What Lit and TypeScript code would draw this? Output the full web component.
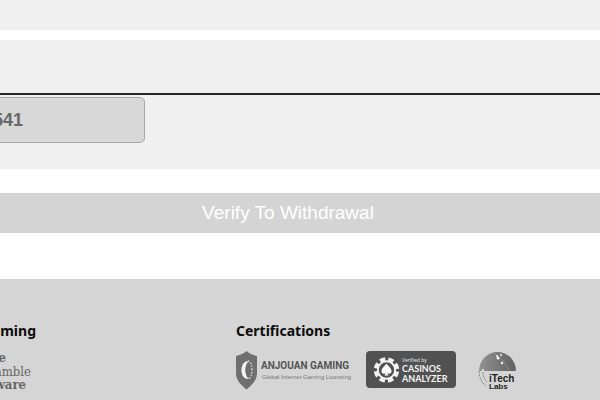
import { LitElement, html, css, svg } from "lit";
import { customElement } from "lit/decorators.js";

const aware = svg`
  <svg width="60" height="40" viewBox="0 0 60 40" role="img" aria-label="be Gamble Aware">
    <text class="aware strong" x="30" y="11">be</text>
    <text class="aware" x="55" y="25">Gamble</text>
    <text class="aware strong" x="50" y="38">Aware</text>
  </svg>`;

const anjouan = svg`
  <svg width="116" height="39" viewBox="0 0 116 39" role="img" aria-label="Anjouan Gaming">
    <path d="M10.500 0C7 3 4 4 0 5V22C0 29 4 33 10.500 38.500C17 33 21 29 21 22V5C17 4 14 3 10.500 0Z" fill="#6f6f6f"/>
    <path d="M13 10C3 9 3 29 13 28C8 25 8 13 13 10Z" fill="#f4f4f4"/>
    <path d="M12 10Q16 11 16 19Q16 27 12 28" fill="none" stroke="#d4d4d4" stroke-width="1.500" stroke-dasharray="1.500 1.500"/>
    <text class="name" x="25" y="18">ANJOUAN GAMING</text>
    <text class="tag" x="26" y="28">Global Internet Gaming Licensing</text>
  </svg>`;

const analyzer = svg`
  <svg width="90" height="38" viewBox="0 0 90 38" role="img" aria-label="Verified by Casinos Analyzer">
    <rect width="90" height="37" rx="4" fill="#515151"/>
    <circle cx="20.500" cy="19" r="10.500" fill="none" stroke="#f2f2f2" stroke-width="4.500" stroke-dasharray="5.250 2.997" transform="rotate(8 20.500 19)"/>
    <circle cx="20.500" cy="19" r="8.700" fill="none" stroke="#f2f2f2" stroke-width="2"/>
    <path d="M20.500 12.500C19 15 15.500 17 15.500 20C15.500 23 18.500 23.500 20 21.500L18.500 24.500H22.500L21 21.500C22.500 23.500 25.500 23 25.500 20C25.500 17 22 15 20.500 12.500Z" fill="#fff"/>
    <text class="by" x="36" y="11">Verified by</text>
    <text class="brand" x="36" y="21">CASINOS</text>
    <text class="brand" x="36" y="31">ANALYZER</text>
  </svg>`;

const itech = svg`
  <svg width="40" height="40" viewBox="0 0 40 40" role="img" aria-label="iTech Labs">
    <defs>
      <linearGradient id="globe" x1="0" y1="0" x2="1" y2="0">
        <stop offset="0" stop-color="#929292"/>
        <stop offset="1" stop-color="#606060"/>
      </linearGradient>
    </defs>
    <path d="M1 20A18.500 19 0 0 1 38 20Z" fill="url(#globe)"/>
    <path d="M15 2Q25 7 31 19" fill="none" stroke="#8c8c8c" stroke-width="1"/>
    <g fill="#f2f2f2"><circle cx="19" cy="5" r="1"/><circle cx="23" cy="4" r="1"/><circle cx="20" cy="7" r="1.500"/><circle cx="24" cy="12" r="1.200"/><circle cx="5" cy="19" r="1"/></g>
    <path d="M1 20C1 27 4 32 8 35M5 21C5 26 7 29 9 31" fill="none" stroke="#858585" stroke-width="1" stroke-dasharray="2 1"/>
    <text class="lab" x="11" y="31">iTech</text>
    <text class="lab small" x="11" y="38">Labs</text>
  </svg>`;

@customElement("app-root")
export class AppRoot extends LitElement {
  static styles = css`
    :host {
      display: block;
      overflow: hidden;
      background: #fff;
      font-family: "Liberation Sans", Arial, sans-serif;
    }
    * { box-sizing: border-box; }
    .page { margin-left: -24px; }
    .strip { height: 30px; background: #f0f0f0; }
    .panel {
      margin-top: 10px;
      padding: 53px 0 26px;
      background: #f0f0f0;
    }
    .rule {
      margin: 0;
      border: 0;
      border-top: 2px solid #2a2627;
    }
    .field {
      display: block;
      width: 169px;
      height: 46px;
      margin-top: 2px;
      padding: 0 16px;
      border: 1px solid #a6a6a6;
      border-radius: 5px;
      background: #d8d8d8;
      color: #686868;
      font: bold 18px "Liberation Sans", Arial, sans-serif;
    }
    .verify {
      display: block;
      width: 100%;
      height: 40px;
      margin: 24px 0 46px;
      padding: 0;
      border: 0;
      background: #d4d4d4;
      color: #fff;
      font: 19px "Liberation Sans", Arial, sans-serif;
    }
    footer {
      display: grid;
      grid-template-columns: 60px 1fr;
      column-gap: 200px;
      min-height: 121px;
      padding-top: 42px;
      background: #d5d5d5;
    }
    h2 {
      margin: 0 0 10px;
      color: #0c0c0c;
      font: bold 14px/20px "Noto Sans", sans-serif;
    }
    .safer h2 { text-align: right; }
    .logos { display: flex; align-items: flex-start; }
    .logos svg { flex: none; margin-right: 14px; }
    .logos svg + svg { margin-right: 22px; }
    .aware {
      font: 13px "DejaVu Serif Condensed", "DejaVu Serif", serif;
      fill: #666;
      text-anchor: end;
    }
    .strong { font-weight: bold; }
    .name { font: bold 10px Roboto, sans-serif; fill: #555; }
    .tag { font: 6px "Liberation Sans", sans-serif; fill: #777; }
    .by { font: 5px "Open Sans", sans-serif; fill: #eee; }
    .brand { font: bold 9px Lato, sans-serif; fill: #f4f4f4; }
    .lab { font: bold 10px "Liberation Sans", sans-serif; fill: #1d1d1d; }
    .small { font-size: 8px; }
  `;

  render() {
    return html`
      <main class="page">
        <div class="strip"></div>
        <section class="panel">
          <hr class="rule" />
          <input class="field" type="text" value="541" aria-label="Amount" disabled />
        </section>
        <button class="verify" type="button">Verify To Withdrawal</button>
        <footer>
          <section class="safer">
            <h2>Gaming</h2>
            <div class="logos">${aware}</div>
          </section>
          <section>
            <h2>Certifications</h2>
            <div class="logos">${anjouan}${analyzer}${itech}</div>
          </section>
        </footer>
      </main>
    `;
  }
}
